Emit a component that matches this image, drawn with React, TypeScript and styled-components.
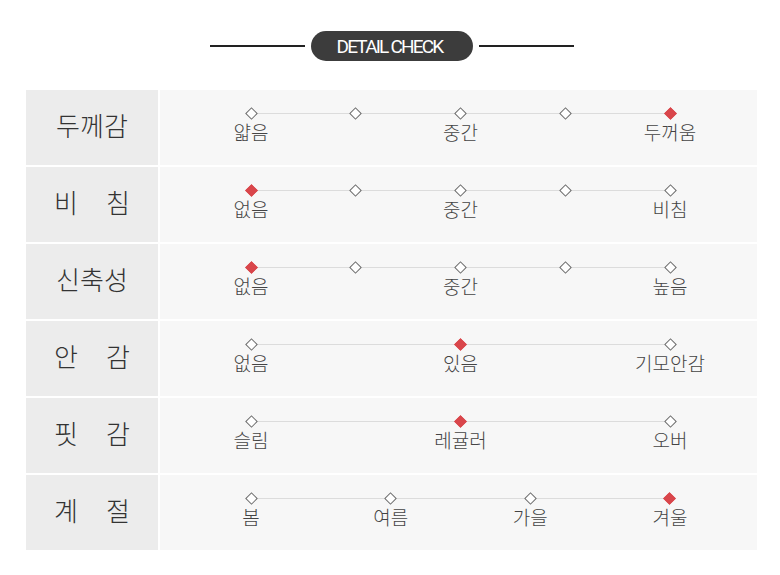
import React from "react";
import styled, { createGlobalStyle } from "styled-components";

const Global = createGlobalStyle`
  html, body { margin: 0; padding: 0; background: #ffffff; }
  body { font-family: "Noto Sans CJK KR", "Noto Sans", sans-serif; }
`;

const Page = styled.div`
  width: 780px;
  padding-top: 31px;
  box-sizing: border-box;
`;

const Header = styled.div`
  display: flex;
  align-items: center;
  justify-content: center;
  gap: 6px;
  height: 30px;
  margin-left: 3px;
`;

const Rule = styled.div`
  width: 95px;
  height: 2px;
  background: #222;
`;

const Pill = styled.div`
  width: 162px;
  height: 30px;
  border-radius: 15px;
  background: #3c3c3c;
  color: #fff;
  display: flex;
  align-items: center;
  justify-content: center;
  font-family: Roboto, "Liberation Sans", sans-serif;
  font-size: 19px;
  letter-spacing: -1.8px;
  padding-right: 4px;
  box-sizing: border-box;
`;

const Table = styled.div`
  margin: 29px 0 0 26px;
  width: 731px;
  display: flex;
  flex-direction: column;
  gap: 2px;
`;

const Row = styled.div`
  display: grid;
  grid-template-columns: 132px 1fr;
  gap: 2px;
  height: 75px;
`;

const LabelCell = styled.div`
  background: #ececec;
  display: flex;
  align-items: center;
  justify-content: center;
  padding-bottom: 5px;
  box-sizing: border-box;
`;

const LabelText = styled.div<{ $spread: boolean }>`
  width: 76px;
  display: flex;
  justify-content: ${(p) => (p.$spread ? "space-between" : "center")};
  font-size: 26px;
  font-weight: 300;
  line-height: 32px;
  color: #333;
`;

const ContentCell = styled.div`
  background: #f7f7f7;
  padding-top: 19px;
  padding-left: 91px;
  box-sizing: border-box;
`;

const Track = styled.div`
  position: relative;
  width: 419px;
  display: flex;
  justify-content: space-between;
  &::before {
    content: "";
    position: absolute;
    left: 0;
    right: 0;
    top: 4px;
    height: 1px;
    background: #dcdcdc;
  }
`;

const Point = styled.div`
  width: 0;
  display: flex;
  flex-direction: column;
  align-items: center;
  position: relative;
`;

const Diamond = styled.div<{ $on: boolean }>`
  width: 9px;
  height: 9px;
  flex: none;
  transform: rotate(45deg);
  box-sizing: border-box;
  background: ${(p) => (p.$on ? "#d9464b" : "#fff")};
  border: 1px solid ${(p) => (p.$on ? "#d9464b" : "#6a6a6a")};
`;

const PointLabel = styled.div`
  margin-top: 3px;
  font-size: 19px;
  font-weight: 300;
  line-height: 22px;
  color: #444;
  white-space: nowrap;
  min-height: 22px;
`;

type RowData = { label: string; points: string[]; active: number };

const rows: RowData[] = [
  { label: "두께감", points: ["얇음", "", "중간", "", "두꺼움"], active: 4 },
  { label: "비침", points: ["없음", "", "중간", "", "비침"], active: 0 },
  { label: "신축성", points: ["없음", "", "중간", "", "높음"], active: 0 },
  { label: "안감", points: ["없음", "있음", "기모안감"], active: 1 },
  { label: "핏감", points: ["슬림", "레귤러", "오버"], active: 1 },
  { label: "계절", points: ["봄", "여름", "가을", "겨울"], active: 3 },
];

export default function App() {
  return (
    <Page>
      <Global />
      <Header>
        <Rule />
        <Pill>DETAIL CHECK</Pill>
        <Rule />
      </Header>
      <Table>
        {rows.map((r) => (
          <Row key={r.label}>
            <LabelCell>
              <LabelText $spread={r.label.length === 2}>
                {r.label.split("").map((c, i) => (
                  <span key={i}>{c}</span>
                ))}
              </LabelText>
            </LabelCell>
            <ContentCell>
              <Track>
                {r.points.map((p, i) => (
                  <Point key={i}>
                    <Diamond $on={i === r.active} />
                    <PointLabel>{p}</PointLabel>
                  </Point>
                ))}
              </Track>
            </ContentCell>
          </Row>
        ))}
      </Table>
    </Page>
  );
}
